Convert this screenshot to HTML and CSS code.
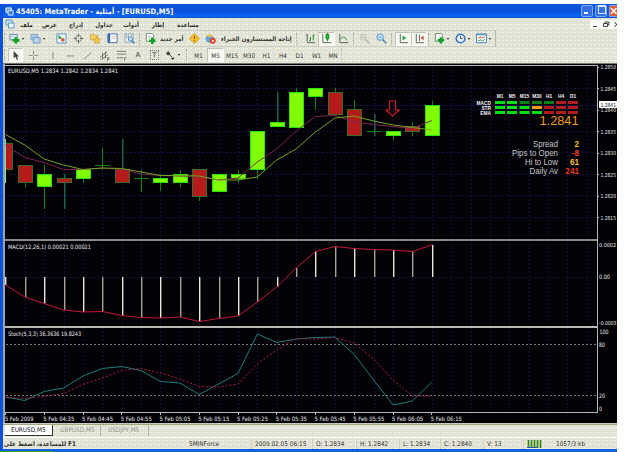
FILE: index.html
```
<!DOCTYPE html>
<html lang="ar">
<head>
    <meta charset="UTF-8">
    <title>45405: MetaTrader</title>
    <link rel="stylesheet" href="styles.css">
</head>
<body>
    <div class="window">
        <div class="titlebar">
            <svg class="app-icon" viewBox="0 0 10 10"><path d="M1 1h6v5H1z" fill="#5c9be8" stroke="#fff"/><path d="M3.500 4h5.500v5H3.500z" fill="#3c7ad8" stroke="#dff0ff"/></svg>
            <span class="title">45405: MetaTrader - <span class="ar">أمثلية</span> - [EURUSD,M5]</span>
            <span class="win-btn min"></span>
            <span class="win-btn max"></span>
            <span class="win-btn close"><svg viewBox="0 0 7 10"><path d="M1 2l5.500 6M6.500 2L1 8" stroke="#fff" stroke-width="1.600"/></svg></span>
        </div>

        <div class="menu">
            <svg viewBox="0 0 10 10"><path d="M1 1h6v5H1z" fill="#cde4f5" stroke="#5b9ac8"/><path d="M3.500 4h5.500v5H3.500z" fill="#eef8ff" stroke="#5b9ac8"/></svg>
            <span>ملف</span><span>عرض</span><span>إدراج</span><span>جداول</span><span>أدوات</span><span>إطار</span><span>مساعدة</span>
            <svg class="child-btns" viewBox="0 0 27 9" fill="none" stroke="#44443e"><path d="M3 6.500h4"/><path d="M13.500 3.500h4v3h-4zM15 3.500v-1.500h4v3h-1.500"/><path d="M24.500 2l4 5M28.500 2l-4 5"/></svg>
        </div>

        <div class="toolbar main">
            <span class="handle"></span>
            <span class="btn drop"><svg viewBox="0 0 12 12"><path d="M1 1.500h8v6H1z" fill="#cfe2ee" stroke="#66879b"/><path d="M7.500 4.500v7M4 8h7.500" stroke="#10a422" stroke-width="3"/></svg></span>
            <span class="btn drop"><svg viewBox="0 0 12 12"><path d="M1 1.500h7.500v6H1z" fill="#a9cbea" stroke="#7ba3c8"/><path d="M3.500 5h7.500v6H3.500z" fill="#b9d5ee" stroke="#6c96bf"/></svg></span>
            <span class="btn"><svg viewBox="0 0 12 12"><path d="M1 1h10v10H1z" fill="#e9f4fb" stroke="#5593c4"/><path d="M2.500 3l3 2.500M3 5.500h3" stroke="#2a9b33" stroke-width="1.500"/><circle cx="7.500" cy="7.500" r="2" fill="#e55832"/></svg></span>
            <span class="btn"><svg viewBox="0 0 12 12" fill="none" stroke="#6f6f68"><circle cx="6" cy="6" r="3.300"/><path d="M6 .5v4M6 7.500v4M.5 6h4M7.500 6h4"/></svg></span>
            <span class="btn"><svg viewBox="0 0 12 12"><path d="M.5 1.500h4l1 1h3v5h-8z" fill="#f2d264" stroke="#cda745"/><path d="M7.500 4l1.200 2.500 3 .3-2 2 .6 2.700-2.800-1.300L5 11.500l.5-2.700-2-2 3-.3z" fill="#f9cd40" stroke="#c2952c" stroke-width=".7"/></svg></span>
            <span class="btn"><svg viewBox="0 0 12 12"><path d="M1 1h10v9.500H1z" fill="#fff" stroke="#3968ad"/><path d="M1 1h2.500v9.500H1z" fill="#3968ad"/><path d="M5 4h5M5 6h5" stroke="#d9a7a7" stroke-width=".7"/></svg></span>
            <span class="btn"><svg viewBox="0 0 12 12"><path d="M1 1h9v9H1z" fill="#eef3f5" stroke="#87a0b3"/><path d="M3 2v4M5 2v3M8 2v2" stroke="#87a0b3"/><circle cx="7" cy="6.500" r="2.300" fill="#cfe8fa" stroke="#4781b8"/><path d="M8.500 8.500l3 3" stroke="#4781b8" stroke-width="1.500"/></svg></span>
            <span class="handle"></span>
            <span class="btn label"><svg viewBox="0 0 12 12"><path d="M1.500.5h6l2 2V9h-8z" fill="#fff" stroke="#6f8b78"/><path d="M3 3.500h4M3 5.500h4" stroke="#999" stroke-width=".7"/><path d="M8 5v7M4.500 8.500h7" stroke="#10a028" stroke-width="2.800"/></svg><b class="order">أمر جديد</b></span>
            <span class="btn"><svg viewBox="0 0 12 12"><path d="M6 .5L11.500 6 6 11.500.5 6z" fill="#f8c32e" stroke="#d99a20"/><path d="M6 3v3.500M6 7.800v1.200" stroke="#8a5a08" stroke-width="1.400"/></svg></span>
            <span class="btn label"><svg viewBox="0 0 12 12"><circle cx="5" cy="6" r="4.500" fill="#62a3de"/><path d="M1 4q4-6 8 0z" fill="#f3c74c"/><circle cx="8.500" cy="8.500" r="3.200" fill="#e0401f"/><path d="M7.500 7.500h2v2h-2z" fill="#fff"/></svg><b class="experts">إتاحة المستشارون الخبراء</b></span>
            <span class="handle"></span>
            <span class="btn"><svg viewBox="0 0 12 12" fill="none"><path d="M2.500 1v9.500H11M1 2.500h1.500" stroke="#57615a"/><path d="M6 4v5M4.500 8H6M9 1.500V8M9 3h1.500" stroke="#1b8e2b"/></svg></span>
            <span class="btn pressed"><svg viewBox="0 0 12 12" fill="none"><path d="M2 1v9.500h9" stroke="#57615a"/><path d="M7 0v9" stroke="#117a22"/><path d="M5.500 1.500h3v5h-3z" fill="#20c53a" stroke="#117a22"/></svg></span>
            <span class="btn"><svg viewBox="0 0 12 12" fill="none"><path d="M2 1v9.500h9" stroke="#57615a"/><path d="M2.500 7q3-6 7.500 1" stroke="#359640"/></svg></span>
            <span class="handle"></span>
            <span class="btn"><svg viewBox="0 0 12 12" fill="none" stroke="#b6b8b0"><circle cx="4.500" cy="4.500" r="3.300"/><path d="M3 4.500h3M4.500 3v3"/><path d="M7 7l4 4" stroke-width="1.800"/></svg></span>
            <span class="btn"><svg viewBox="0 0 12 12" stroke="#3b82ce"><circle cx="4.500" cy="4.500" r="3.500" fill="#d3ebff"/><path d="M3 4.500h3"/><path d="M7.200 7.200l4 4" stroke="#5a86b4" stroke-width="1.800"/></svg></span>
            <span class="handle"></span>
            <span class="btn pressed"><svg viewBox="0 0 12 12"><path d="M2.500 1v9.500H11" fill="none" stroke="#57615a"/><path d="M5 3l4 2.500L5 8z" fill="#1da335"/></svg></span>
            <span class="btn pressed"><svg viewBox="0 0 12 12"><path d="M2.500 1v9.500H11M6 2v7" fill="none" stroke="#57615a"/><path d="M10.500 3L7 5.500 10.500 8z" fill="#cf5533"/></svg></span>
            <span class="handle"></span>
            <span class="btn drop"><svg viewBox="0 0 12 12"><path d="M1.500.5h6l2 2V9h-8z" fill="#f5f8f1" stroke="#6f7f72"/><path d="M7.500 4.500v7M4 8h7" stroke="#10a028" stroke-width="2.800"/></svg></span>
            <span class="btn drop"><svg viewBox="0 0 12 12"><circle cx="6" cy="6" r="4.700" fill="#eaf4ff" stroke="#3672be" stroke-width="1.700"/><path d="M6 3v3h2.500" fill="none" stroke="#444"/></svg></span>
            <span class="btn drop"><svg viewBox="0 0 12 12" fill="none"><path d="M.5 1h11v9.500H.5z" fill="#fff" stroke="#3c7cb8"/><path d="M.5 2h11" stroke="#3c7cb8"/><path d="M2 5.500l3-1 2 1 3-1.500" stroke="#cc5135"/><path d="M2 8.500l3-1 2 1 3-1.500" stroke="#32954a"/></svg></span>
        </div>

        <div class="toolbar draw">
            <span class="handle"></span>
            <span class="btn pressed"><svg viewBox="0 0 12 12"><path d="M4 1v8l2-1.700L7.500 11l1.300-.7L7.500 7H10z" fill="#444"/></svg></span>
            <span class="btn"><svg viewBox="0 0 12 12" stroke="#85857c"><path d="M6 1v4M6 7v4M1 6h4M7 6h4"/></svg></span>
            <span class="btn"><svg viewBox="0 0 12 12" stroke="#85857c"><path d="M6.500 2v8"/></svg></span>
            <span class="btn"><svg viewBox="0 0 12 12" stroke="#85857c"><path d="M2 6.500h8"/></svg></span>
            <span class="btn"><svg viewBox="0 0 12 12" stroke="#85857c"><path d="M2 10l8-7"/></svg></span>
            <span class="btn"><svg viewBox="0 0 12 12" stroke="#66665f" stroke-width=".9"><path d="M1 8l8-6M2 11l8-6M4 3v7M7 2v7M9.500 8v4M9.500 8.500h2M9.500 10h2" /></svg></span>
            <span class="btn"><svg viewBox="0 0 12 12" stroke="#77776f"><path d="M1 1.500h10M1 4.500h10M1 8.500h7M9.500 8v4M9.500 8.500h2"/></svg></span>
            <span class="btn glyph">A</span>
            <span class="btn glyph"><em>T</em></span>
            <span class="btn drop"><svg viewBox="0 0 12 12" fill="#44443e"><path d="M1 4l2.500-3L6 4 3.500 6zM6 8.500h5L8.500 11z"/><path d="M4 4l4 4" stroke="#44443e"/></svg></span>
            <span class="handle"></span>
            <span class="btn tf">M1</span>
            <span class="btn tf pressed">M5</span>
            <span class="btn tf">M15</span>
            <span class="btn tf">M30</span>
            <span class="btn tf">H1</span>
            <span class="btn tf">H4</span>
            <span class="btn tf">D1</span>
            <span class="btn tf">W1</span>
            <span class="btn tf last">MN</span>
        </div>

        <svg class="chart" id="chart" viewBox="3 63 614 361"></svg>

        <div class="tabs">
            <span class="tab active">EURUSD,M5</span>
            <span class="tab">GBPUSD,M5</span>
            <span class="tab">USDJPY,M5</span>
        </div>

        <div class="status">
            <span class="help" dir="rtl">F1 للمساعدة، اضغط على</span>
            <span>5MINForce</span>
            <span>2009.02.05 06:15</span>
            <span>O: 1.2834</span>
            <span>H: 1.2842</span>
            <span>L: 1.2834</span>
            <span>C: 1.2840</span>
            <span>V: 13</span>
            <span class="link"><svg viewBox="0 0 15 8"><path d="M0 0h15v8H0z" fill="#d9dc8a"/><path d="M1.500 0v8M4.500 0v8M7.500 0v8M10.500 0v8M13.500 0v8" stroke="#2c7f4c" stroke-width="1.500"/><path d="M0 7.500h11" stroke="#245f9c"/></svg></span>
            <span class="traffic">1057/3 kb</span>
        </div>
    </div>

    <script src="chart.js"></script>
</body>
</html>
```

FILE: styles.css
```
* {
    margin: 0;
    padding: 0;
    box-sizing: border-box;
}

body {
    width: 625px;
    height: 452px;
    padding-top: 4px;
    background: linear-gradient(90deg, #3c9a34 53px, #1060e0 53px, #1060e0 617px, #fcfefc 617px) 0 451px / 100% 1px no-repeat #fcfefc;
    font-family: "DejaVu Sans Condensed", "DejaVu Sans", sans-serif;
    font-size: 6.4px;
    color: #33332e;
    overflow: hidden;
}

.window {
    width: 617px;
    height: 447px;
    display: flex;
    flex-direction: column;
    border-left: 3px solid #0c50dc;
    border-bottom: 2px solid #1060e0;
    overflow: hidden;
    /* dithered beige of the toolbars */
    background-color: #e2e3d7;
    background-image:
        conic-gradient(at 1px 1px, transparent 75%, #fdfdf6 0),
        conic-gradient(at 1px 1px, transparent 75%, #fafab4 0);
    background-size: 4px 4px, 8px 6px;
    background-position: 0 0, 2px 2px;
}

.titlebar {
    flex: 0 0 14px;
    margin-left: -3px;
    padding-left: 5px;
    display: flex;
    align-items: center;
    background: linear-gradient(#0b58dd, #0a50d8 50%, #0c66f8 85%, #0a4fd0);
    color: #fff;
}

.app-icon {
    width: 9px;
    height: 9px;
    margin-right: 2px;
}

.title {
    flex: 1;
    font-size: 7.5px;
    font-weight: bold;
    white-space: nowrap;
}

.win-btn {
    width: 12px;
    height: 12px;
    margin-right: 2px;
    border: 1px solid #7fa9f2;
    border-radius: 2px;
    background: #3570e4;
    position: relative;
}

.win-btn.min::after,
.win-btn.max::after {
    content: "";
    position: absolute;
    left: 2px;
    bottom: 2px;
    width: 4px;
    height: 2px;
    background: #fff;
}

.win-btn.max::after {
    width: 6px;
    height: 6px;
    background: none;
    border: 1px solid #dbe8ff;
    border-top-width: 2px;
}

.win-btn.close {
    width: 8px;
    margin-right: 0;
    border-right: 0;
    border-radius: 2px 0 0 2px;
    background: #e5552c;
}

.win-btn.close svg {
    display: block;
    width: 7px;
    height: 10px;
}

.menu {
    flex: 0 0 12px;
    display: grid;
    grid-template-columns: 11px 23px 23px 30px 26px 28px 26px 34px 1fr;
    align-items: center;
    justify-items: center;
    padding-left: 1px;
    font-size: 6.2px;
    font-weight: bold;
}

.menu svg {
    width: 10px;
    height: 10px;
}

.menu .child-btns {
    justify-self: end;
    width: 27px;
    height: 9px;
    background: #fafaf6;
}

.toolbar {
    display: grid;
    align-items: center;
}

.toolbar.main {
    flex: 0 0 17px;
    width: 493px;
    grid-template-columns: 4px 21px 25px 17px 17px 17px 17px 17px 5px 43px 17px 92px 7px 16px 17px 17px 4px 17px 17px 5px 16px 16px 5px 21px 21px 21px;
    border-top: 1px solid #cfcfc2;
    border-bottom: 1px solid #cfcfc2;
    border-right: 1px solid #b9b9ac;
}

.toolbar.draw {
    flex: 0 0 16px;
    grid-template-columns: 5px 15px 20px 18px 18px 16px 18px 17px 16px 17px 22px 5px 17px 17px 16px 18px 17px 16px 17px 17px 17px;
}

.handle {
    width: 2px;
    height: 12px;
    margin-left: 1px;
    border-left: 1px dotted #a5a598;
}

.btn {
    height: 14px;
    display: flex;
    align-items: center;
    justify-content: center;
    white-space: nowrap;
}

.btn svg {
    flex: none;
    width: 11px;
    height: 11px;
}

.btn.drop,
.btn.label {
    justify-content: flex-start;
    padding-left: 2px;
}

.btn.drop::after {
    content: "";
    margin-left: 2px;
    border: 1.5px solid transparent;
    border-top: 2px solid #222;
    border-bottom: 0;
}

.btn.pressed {
    background: #f6f6f0;
    border: 1px solid #c3c3b8;
    border-right-color: #fff;
    border-bottom-color: #fff;
}

.btn b {
    margin-left: 4px;
    font-size: 6.2px;
}

.btn b.experts {
    margin-left: 5px;
}

.glyph {
    font-size: 7px;
    font-weight: bold;
    color: #77776f;
}

.glyph em {
    padding: 0 1.5px;
    border: 1px dotted #77776f;
    font-style: normal;
    line-height: 8px;
}

.tf {
    font-size: 6.3px;
    color: #33332e;
}

.tf.last {
    border-right: 1px dotted #b9b9ac;
}

.chart {
    flex: 0 0 361px;
    width: 614px;
    height: 361px;
    display: block;
}

.chart text {
    font-size: 6px;
    fill: #ececec;
}

.chart .scale {
    font-size: 5.4px;
}

.chart .bold {
    font-family: "Liberation Sans", Arial, sans-serif;
    font-weight: bold;
    font-size: 4.8px;
    fill: #f4f4f4;
}

.chart .price {
    font-family: "Liberation Sans", Arial, sans-serif;
    font-size: 13.5px;
    fill: #f09a1c;
}

.chart .info {
    font-family: "Liberation Sans", Arial, sans-serif;
    font-size: 8.2px;
    fill: #c8c8c8;
}

.chart .value {
    font-family: "Liberation Sans", Arial, sans-serif;
    font-size: 8.2px;
    font-weight: bold;
}

.chart .bid {
    font-size: 5.4px;
    fill: #111;
}

.tabs {
    flex: 0 0 13px;
    display: flex;
    border-top: 1px solid #a5a77c;
    padding-left: 2px;
}

.tab {
    height: 11px;
    width: 48px;
    padding-left: 7px;
    line-height: 11px;
    font-size: 6.4px;
    color: #98988b;
    border-right: 1px solid #b3b3a5;
}

.tab.active {
    padding-left: 6px;
    background: #fff;
    color: #222;
    border-right: 1px solid #333;
    border-bottom: 1px solid #333;
}

.status {
    flex: 1;
    display: grid;
    grid-template-columns: 183px 66px 61px 44px 43px 41px 43px 40px 29px 1fr;
    align-items: center;
    border-top: 1px solid #fff;
}

.status span {
    height: 10px;
    line-height: 10px;
    padding-left: 3px;
    border-right: 1px solid #d0d0c3;
    white-space: nowrap;
}

.status .help {
    padding: 0 110px 0 0;
    border-right: 0;
    font-weight: bold;
}

.status .link {
    border-right: 0;
}

.status .link svg {
    width: 15px;
    height: 8px;
    margin-top: 1px;
}

.status .traffic {
    border-right: 0;
}
```

FILE: chart.js
```
const NS = 'http://www.w3.org/2000/svg';
const svg = document.getElementById('chart');

function add(tag, attrs, text) {
    const el = document.createElementNS(NS, tag);
    for (const key in attrs) el.setAttribute(key, attrs[key]);
    if (text !== undefined) el.textContent = text;
    svg.appendChild(el);
}

function rect(x, y, w, h, fill) {
    add('rect', { x, y, width: w, height: h, fill });
}

function hline(y, color, dash) {
    add('line', { x1: 6, x2: 597, y1: y, y2: y, stroke: color, 'stroke-dasharray': dash || 'none' });
}

function curve(ys, color, dash) {
    const points = ys.map((y, i) => `${barX(i)},${y}`).join(' ');
    add('polyline', { points, fill: 'none', stroke: color, 'stroke-width': 1, 'stroke-dasharray': dash || 'none' });
}

function label(x, y, text, width, cls) {
    add('text', { x, y, textLength: width, lengthAdjust: 'spacingAndGlyphs', class: cls || '' }, text);
}

function barX(i) {
    return 5.4 + 19.38 * i;
}

// background and frame
rect(3, 63, 614, 361, '#020106');
rect(3, 63, 2, 361, '#9aa3ad');
rect(3, 63, 614, 1, '#77776f');
rect(5, 65, 593, 1, '#b5b5b5');

// grid
for (let i = 1; i <= 30; i++) {
    const x = Math.round(barX(i)) + 0.5;
    if (x > 596) break;
    add('line', { x1: x, x2: x, y1: 67, y2: 412, stroke: '#11113c', 'stroke-dasharray': '2 2' });
}
[88.5, 109.5, 131.5, 152.5, 174.5, 195.5, 217.5, 277.5].forEach(y => hline(y, '#10103a', '2 2'));
hline(105.5, '#10103f');
hline(344.5, '#77777a', '2 2');
hline(395.5, '#77777a', '2 2');

// candles: top of body, bottom of body, top of wick, bottom of wick, colour
const candles = [
    [143, 170, 139, 183, 'r'], [165, 183, 165, 187, 'r'], [174, 187, 165, 209, 'g'],
    [178, 183, 174, 209, 'r'], [169, 179, 169, 183, 'g'], [165, 166, 148, 170, 'd'],
    [169, 183, 139, 183, 'r'], [178, 179, 170, 192, 'd'], [178, 183, 174, 191, 'g'],
    [174, 183, 170, 187, 'g'], [169, 197, 169, 201, 'r'], [174, 192, 174, 192, 'g'],
    [174, 179, 170, 183, 'g'], [131, 170, 131, 179, 'g'], [122, 127, 92, 127, 'g'],
    [92, 128, 88, 128, 'g'], [88, 97, 88, 110, 'g'], [92, 115, 88, 115, 'r'],
    [109, 136, 100, 136, 'r'], [131, 132, 114, 136, 'd'], [131, 136, 131, 140, 'g'],
    [126, 132, 122, 136, 'r'], [105, 136, 101, 136, 'g']
];
const tealWicks = [3, 6, 14, 19];

candles.forEach(([top, bottom, high, low, kind], i) => {
    const x = Math.round(barX(i));
    const teal = tealWicks.includes(i);
    rect(x, high, teal ? 1.5 : 1, low - high, teal ? '#1d6250' : '#08860c');
    if (kind === 'd') {
        rect(x - 7, top, 15, 1, '#08860c');
        return;
    }
    add('rect', {
        x: x - 7 + 0.5, y: top + 0.5, width: 14, height: bottom - top - 1,
        fill: kind === 'g' ? '#80fd02' : '#b51b1b',
        stroke: kind === 'g' ? '#25e40a' : '#3b6b24'
    });
});
rect(5, 139, 1, 44, '#6df092');

// moving averages
curve([145, 157.5, 162.5, 169.5, 169.5, 168, 169.5, 174, 175.5, 176, 176.5, 180, 178, 162, 149, 131, 116.5, 115.5, 122, 124.5, 126.5, 128.5, 120.5], '#7d2350');
curve([134.5, 145, 159, 165, 169.5, 168, 168.5, 172, 175.5, 175.5, 176, 180, 180, 177, 160, 149, 132, 118, 116, 121, 125, 127.5, 130], '#76a51e');

// hide whatever spills over the left edge
rect(3, 66, 2, 346, '#9aa3ad');

// arrow
add('path', { d: 'M389.500 101h6v9h3.500l-6.500 6-6.500-6h3.500z', fill: 'none', stroke: '#cc1f1f', 'stroke-width': 1.2 });

// MACD
const macd = [285, 297, 303.5, 310, 312, 311.5, 315.5, 317.5, 318, 317, 321.5, 318.5, 316, 302, 287, 268, 251.5, 246.5, 248.5, 249.5, 250, 251.5, 245];
macd.forEach((y, i) => {
    rect(Math.round(barX(i)), Math.min(y, 277), 1.4, Math.abs(y - 277), i % 2 ? '#aaa29a' : '#e9e7d8');
});
curve(macd, '#c8153c');

// stochastic
curve([397, 400.5, 391.5, 388, 376, 368.5, 366.5, 370.5, 381.5, 383, 394.5, 384, 373.5, 334, 342.5, 339, 337.5, 337, 354.5, 380, 405, 401, 382], '#1b7f7a');
curve([397, 398.5, 396.5, 393.5, 384.5, 378, 370.5, 368.5, 373, 379, 386.5, 387, 384, 364, 350, 338.5, 339, 337.5, 343, 359, 380, 396, 396], '#b41a4a', '2 2');

// panel borders
rect(5, 239, 593, 2, '#8a8a86');
rect(5, 326, 593, 2, '#b8b8b4');
rect(5, 412, 593, 1, '#b8b8b8');
rect(597, 65, 1, 348, '#b8b8b8');
rect(3, 423, 614, 1, '#c9c9bd');

// captions
label(8, 72.5, 'EURUSD,M5  1.2834 1.2842 1.2834 1.2841', 110);
label(8, 248.5, 'MACD(12,26,1) 0.00021 0.00021', 83);
label(8, 335.5, 'Stoch(5,3,3) 36.3636 19.8243', 73);

// price scale
['1.2850', '1.2845', '1.2840', '1.2835', '1.2830', '1.2825', '1.2820', '1.2815'].forEach((price, i) => {
    const y = 67 + i * 21.5;
    rect(597, Math.round(y - 0.5), 2, 1, '#b8b8b8');
    label(600.5, y + 2, price, 15.5, 'scale');
});
rect(599, 101, 18, 7, '#fff');
label(600.5, 107, '1.2841', 15.5, 'bid');
label(599, 247, '0.0002', 17, 'scale');
label(599, 279, '0.00', 11);
label(599, 324.5, '-0.0003', 17.5, 'scale');
label(599.5, 334, '100', 9);
label(599, 347, '80', 6);
label(599, 398, '20', 6);
label(599, 411, '0', 3);

// time scale
['2009', '04:35', '04:45', '04:55', '05:05', '05:15', '05:25', '05:35', '05:45', '05:55', '06:05', '06:15'].forEach((time, i) => {
    const x = 5 + i * 38.76;
    rect(Math.round(x), 412, 1, 3, '#b8b8b8');
    label(i ? x - 0.5 : 5, 420.5, '5 Feb ' + time, i ? 31 : 28.5);
});

// signal table
const L = '#06df16', D = '#087f12', R = '#b01b20', O = '#f09a10';
const cols = [495, 507, 519.5, 532, 544, 556, 568];
['M1', 'M5', 'M15', 'M30', 'H1', 'H4', 'D1'].forEach((name, i) => {
    add('text', { x: cols[i] + 5, y: 98, 'text-anchor': 'middle', class: 'bold' }, name);
});
[['MACD', L, L, D, D, D, R, R], ['STR', L, L, L, O, R, R, R], ['EMA', L, L, L, L, R, R, R]].forEach((row, r) => {
    const y = 101 + r * 5;
    add('text', { x: 491, y: y + 3.5, 'text-anchor': 'end', class: 'bold' }, row[0]);
    cols.forEach((x, c) => rect(x, y, 10, 3, row[c + 1]));
});
label(539.5, 125, '1.2841', 39, 'price');

[['Spread', '2', '#f0c020', 25], ['Pips to Open', '-8', '#f03a1c', 46], ['Hi to Low', '61', '#f0c020', 33], ['Daily Av', '241', '#f03a1c', 28.5]].forEach(([name, value, color, width], i) => {
    const y = 146.5 + i * 9.1;
    label(558 - width, y, name, width, 'info');
    add('text', { x: 579, y, 'text-anchor': 'end', class: 'value', style: `fill: ${color}` }, value);
});
```
